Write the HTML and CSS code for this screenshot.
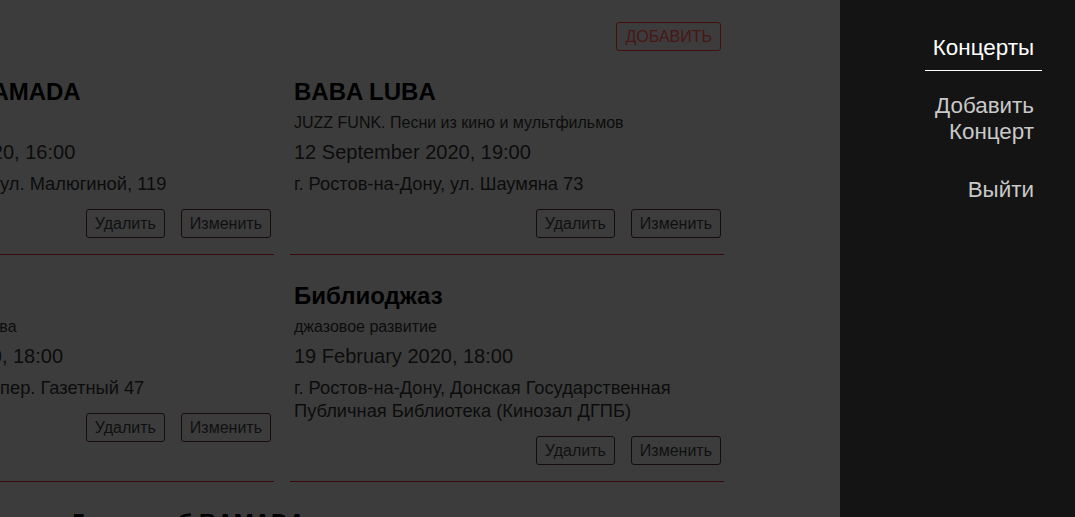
FILE: index.html
```html
<!DOCTYPE html>
<html lang="ru">
<head>
<meta charset="utf-8">
<title>Концерты</title>
<link rel="stylesheet" href="styles.css">
</head>
<body>
<div class="layout">
  <main class="main">
    <div class="board">
      <div class="toolbar">
        <button class="add-btn">Добавить</button>
      </div>
      <div class="cards">
        <article class="card">
          <h2 class="card-title">Джаз-клуб BAMADA</h2>
          <p class="card-sub">Вечер джаза</p>
          <p class="card-date">21 November 2020, 16:00</p>
          <p class="card-addr">г. Ростов-на-Дону, ул. Малюгиной, 119</p>
          <div class="card-actions">
            <button class="btn">Удалить</button>
            <button class="btn">Изменить</button>
          </div>
        </article>
        <article class="card">
          <h2 class="card-title">BABA LUBA</h2>
          <p class="card-sub">JUZZ FUNK. Песни из кино и мультфильмов</p>
          <p class="card-date">12 September 2020, 19:00</p>
          <p class="card-addr">г. Ростов-на-Дону, ул. Шаумяна 73</p>
          <div class="card-actions">
            <button class="btn">Удалить</button>
            <button class="btn">Изменить</button>
          </div>
        </article>
        <article class="card">
          <h2 class="card-title">Jazz Time</h2>
          <p class="card-sub">Квартет Олега Козлова</p>
          <p class="card-date">19 February 2020, 18:00</p>
          <p class="card-addr">г. Ростов-на-Дону, пер. Газетный 47</p>
          <div class="card-actions">
            <button class="btn">Удалить</button>
            <button class="btn">Изменить</button>
          </div>
        </article>
        <article class="card">
          <h2 class="card-title">Библиоджаз</h2>
          <p class="card-sub">джазовое развитие</p>
          <p class="card-date">19 February 2020, 18:00</p>
          <p class="card-addr">г. Ростов-на-Дону, Донская Государственная Публичная Библиотека (Кинозал ДГПБ)</p>
          <div class="card-actions">
            <button class="btn">Удалить</button>
            <button class="btn">Изменить</button>
          </div>
        </article>
        <article class="card">
          <h2 class="card-title">Джаз-клуб BAMADA</h2>
          <p class="card-sub">Джем-сейшн</p>
          <p class="card-date">5 December 2020, 20:00</p>
          <p class="card-addr">г. Ростов-на-Дону, ул. Малюгиной, 119</p>
          <div class="card-actions">
            <button class="btn">Удалить</button>
            <button class="btn">Изменить</button>
          </div>
        </article>
      </div>
    </div>
  </main>
  <nav class="sidebar">
    <a class="nav-link nav-link--active" href="#">Концерты</a>
    <a class="nav-link" href="#">Добавить<br>Концерт</a>
    <a class="nav-link" href="#">Выйти</a>
  </nav>
</div>
</body>
</html>
```

FILE: styles.css
```css
* { box-sizing: border-box; }

html, body {
  margin: 0;
  padding: 0;
  height: 100%;
  overflow: hidden;
}

body {
  font-family: "Liberation Sans", Arial, sans-serif;
  background: #3c3c3c;
  color: #0c0c0c;
}

.layout {
  display: flex;
  height: 100vh;
}

.main {
  flex: 1 1 auto;
  min-width: 0;
  overflow: hidden;
  background: #3c3c3c;
}

.board {
  width: 884px;
  margin-left: -160px;
}

.toolbar {
  display: flex;
  justify-content: flex-end;
  padding: 22px 3px 0 0;
}

.add-btn {
  height: 29px;
  padding: 0 8px;
  border: 1px solid #430e0e;
  border-radius: 3px;
  background: transparent;
  color: #481616;
  font-family: inherit;
  font-size: 16px;
  line-height: 27px;
  text-transform: uppercase;
}

.cards {
  display: flex;
  flex-wrap: wrap;
  justify-content: center;
  column-gap: 16px;
}

.card {
  width: 434px;
  padding: 27px 3px 0 4px;
  border-bottom: 1px solid #3a0909;
}

.card-title {
  margin: 0;
  font-size: 24px;
  line-height: 28px;
  font-weight: bold;
  color: #000;
  white-space: nowrap;
}

.card-sub {
  margin: 8px 0 0;
  font-size: 16px;
  line-height: 18px;
  color: #0c0c0c;
}

.card-date {
  margin: 8px 0 0;
  font-size: 20px;
  line-height: 24px;
  color: #0c0c0c;
}

.card-addr {
  margin: 8px 0 0;
  font-size: 18.3px;
  line-height: 23px;
  color: #0c0c0c;
}

.card-actions {
  display: flex;
  justify-content: flex-end;
  gap: 16px;
  margin: 14px 0 16px;
}

.btn {
  height: 29px;
  padding: 0 8px;
  border: 1px solid #170c0c;
  border-radius: 3px;
  background: transparent;
  color: #101010;
  font-family: inherit;
  font-size: 16px;
  line-height: 27px;
}

.sidebar {
  flex: 0 0 235px;
  background: #141414;
  display: flex;
  flex-direction: column;
  align-items: flex-end;
  gap: 22px;
  padding: 35px 33px 0 0;
}

.nav-link {
  display: block;
  padding: 0 8px 9px;
  border-bottom: 1px solid transparent;
  color: #c9c9c9;
  font-size: 22.4px;
  line-height: 26px;
  text-align: right;
  text-decoration: none;
}

.nav-link--active {
  color: #fff;
  border-bottom-color: #fff;
}
```
